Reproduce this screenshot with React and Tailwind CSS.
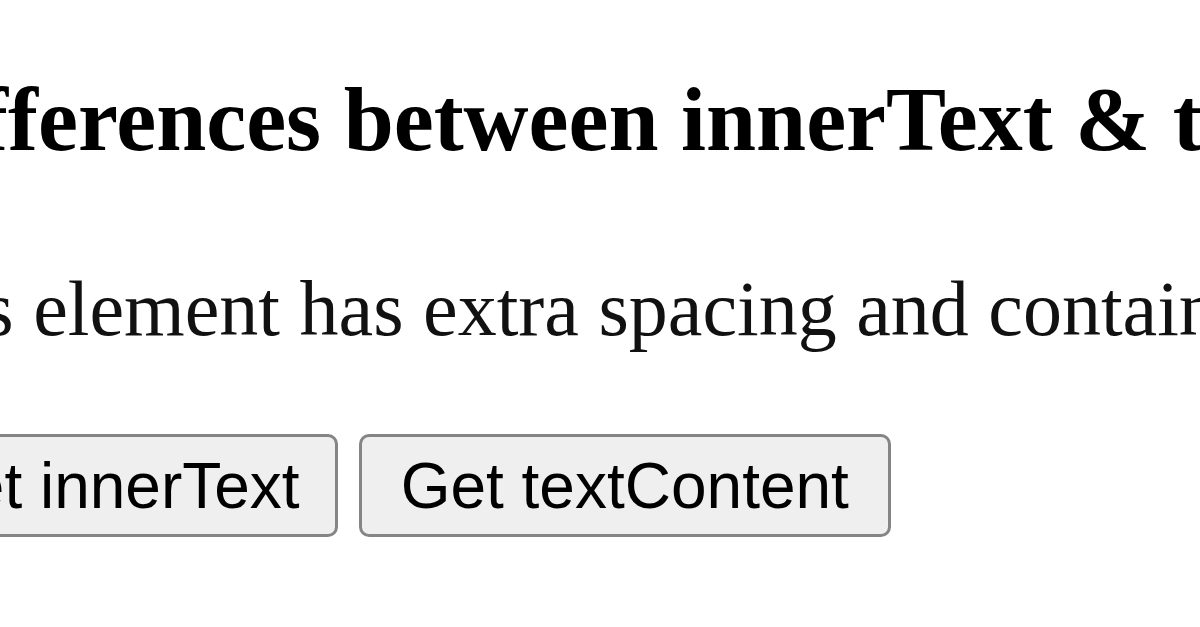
export default function App() {
  return (
    <div className="w-[1200px] h-[627px] overflow-hidden bg-white">
      <div className="ml-[-112px] w-[1600px] pt-[70px]">
        <h2 className="font-['Liberation_Serif',serif] font-bold text-[90px] leading-[100px] text-black whitespace-nowrap">
          Differences between innerText &amp; textContent
        </h2>
        <p className="mt-[95px] ml-[-13px] font-['Liberation_Serif',serif] text-[78px] leading-[88px] text-[#111] whitespace-nowrap">
          This element has extra spacing and contains hidden text.
        </p>
        <div className="mt-[81px] flex gap-[21px] ml-[-10px]">
          <button className="h-[103px] pl-[38px] pr-[35px] border-[3px] border-[#858585] rounded-[10px] bg-[#efefef] font-['Liberation_Sans',Arial,sans-serif] text-[64px] text-black whitespace-nowrap">
            Get innerText
          </button>
          <button className="h-[103px] pl-[39px] pr-[39px] border-[3px] border-[#858585] rounded-[10px] bg-[#efefef] font-['Liberation_Sans',Arial,sans-serif] text-[64px] text-black whitespace-nowrap">
            Get textContent
          </button>
        </div>
      </div>
    </div>
  );
}
